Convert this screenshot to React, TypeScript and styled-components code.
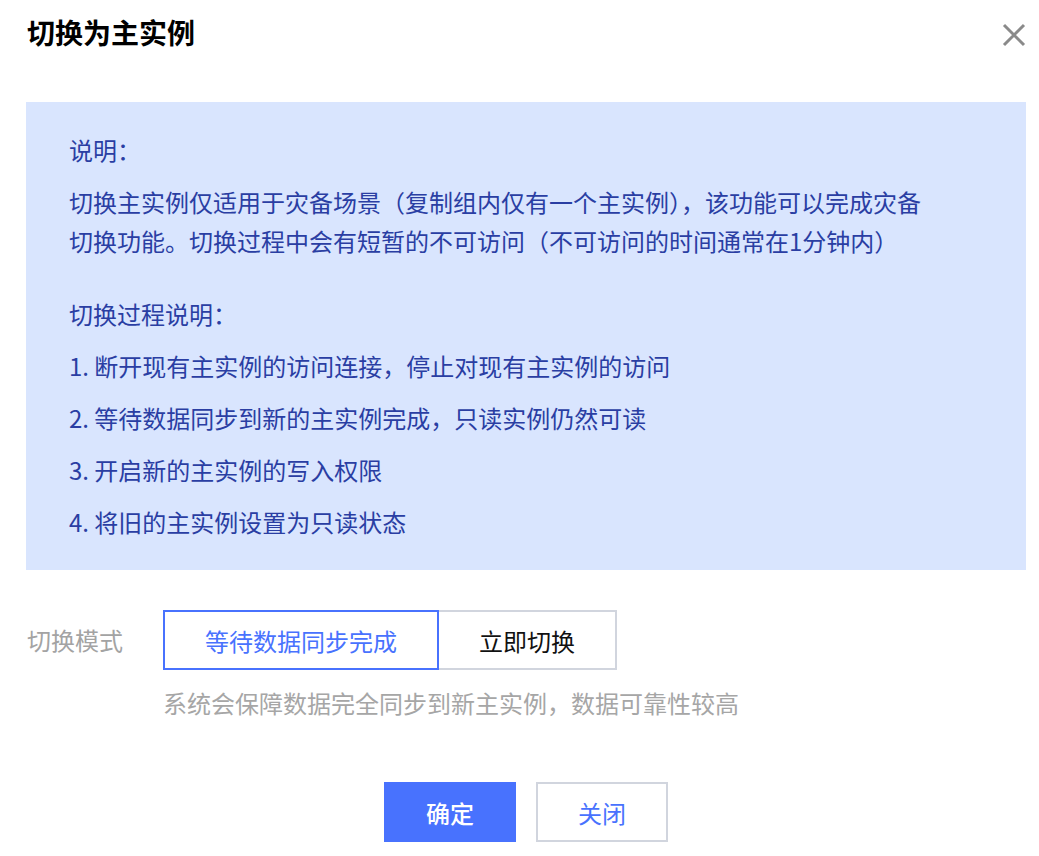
import React, { useState } from "react";
import styled, { createGlobalStyle } from "styled-components";

const GlobalStyle = createGlobalStyle`
  html, body {
    margin: 0;
    padding: 0;
    background: #ffffff;
  }
  body {
    font-family: "Noto Sans CJK SC", "Noto Sans", sans-serif;
  }
`;

const DialogWrapper = styled.div`
  width: 1039px;
  height: 856px;
  box-sizing: border-box;
  padding: 13px 13px 0 26px;
  background: #fff;
  display: flex;
  flex-direction: column;
`;

const DialogHeader = styled.div`
  display: flex;
  align-items: center;
  justify-content: space-between;
  height: 38px;
  margin-bottom: 51px;
`;

const DialogTitle = styled.h2`
  margin: 0 0 0 1px;
  font-size: 28px;
  font-weight: 700;
  line-height: 38px;
  color: #000;
`;

const CloseButton = styled.button`
  width: 28px;
  height: 28px;
  padding: 0;
  margin: 6px -2px 0 0;
  border: none;
  background: none;
  display: flex;
  align-items: center;
  justify-content: center;
  cursor: pointer;
`;

const InfoBox = styled.div`
  background: #d9e5fe;
  color: #2a3ea3;
  padding: 28px 43px 29px;
  font-size: 24px;
  line-height: 39px;
`;

const InfoLine = styled.p<{ $gapTop?: boolean }>`
  margin: ${({ $gapTop }) => ($gapTop ? "34px" : "0")} 0 13px;
  &:last-child {
    margin-bottom: 0;
  }
`;

const FormRow = styled.div`
  display: flex;
  align-items: flex-start;
  margin-top: 40px;
`;

const FormLabel = styled.div`
  width: 136px;
  font-size: 24px;
  line-height: 60px;
  color: #a3a3a3;
  padding-left: 1px;
`;

const FormControls = styled.div`
  display: flex;
  flex-direction: column;
`;

const SegmentGroup = styled.div`
  display: flex;
`;

const SegmentButton = styled.button<{ $active?: boolean }>`
  position: relative;
  height: 60px;
  padding: 0 40px;
  margin-left: -2px;
  font-family: inherit;
  font-size: 24px;
  background: #fff;
  border: 2px solid ${({ $active }) => ($active ? "#4872fe" : "#d1d5de")};
  color: ${({ $active }) => ($active ? "#4872fe" : "#111")};
  z-index: ${({ $active }) => ($active ? 1 : 0)};
  cursor: pointer;
  &:first-child {
    margin-left: 0;
  }
`;

const Hint = styled.div`
  font-size: 24px;
  line-height: 36px;
  color: #a6a6a6;
  margin-top: 15px;
`;

const Footer = styled.div`
  display: flex;
  justify-content: center;
  gap: 20px;
  margin-top: 61px;
`;

const FooterButton = styled.button<{ $primary?: boolean }>`
  width: 132px;
  height: 60px;
  font-family: inherit;
  font-size: 24px;
  cursor: pointer;
  border: 2px solid ${({ $primary }) => ($primary ? "#4872fe" : "#d1d5de")};
  background: ${({ $primary }) => ($primary ? "#4872fe" : "#fff")};
  color: ${({ $primary }) => ($primary ? "#fff" : "#4872fe")};
  font-weight: ${({ $primary }) => ($primary ? 500 : 400)};
`;

const modes = [
  { key: "wait", label: "等待数据同步完成", hint: "系统会保障数据完全同步到新主实例，数据可靠性较高" },
  { key: "now", label: "立即切换", hint: "立即切换到新主实例，可能存在少量数据未同步" },
];

const steps = [
  "1. 断开现有主实例的访问连接，停止对现有主实例的访问",
  "2. 等待数据同步到新的主实例完成，只读实例仍然可读",
  "3. 开启新的主实例的写入权限",
  "4. 将旧的主实例设置为只读状态",
];

export default function App() {
  const [mode, setMode] = useState("wait");
  const current = modes.find((m) => m.key === mode);

  return (
    <>
      <GlobalStyle />
      <DialogWrapper>
        <DialogHeader>
          <DialogTitle>切换为主实例</DialogTitle>
          <CloseButton aria-label="close">
            <svg width="24" height="24" viewBox="0 0 24 24">
              <path
                d="M2 2 L22 22 M22 2 L2 22"
                stroke="#8a8a8a"
                strokeWidth="3"
                fill="none"
              />
            </svg>
          </CloseButton>
        </DialogHeader>

        <InfoBox>
          <InfoLine>说明：</InfoLine>
          <InfoLine>
            切换主实例仅适用于灾备场景（复制组内仅有一个主实例），该功能可以完成灾备
            <br />
            切换功能。切换过程中会有短暂的不可访问（不可访问的时间通常在1分钟内）
          </InfoLine>
          <InfoLine $gapTop>切换过程说明：</InfoLine>
          {steps.map((s) => (
            <InfoLine key={s}>{s}</InfoLine>
          ))}
        </InfoBox>

        <FormRow>
          <FormLabel>切换模式</FormLabel>
          <FormControls>
            <SegmentGroup>
              {modes.map((m) => (
                <SegmentButton
                  key={m.key}
                  $active={m.key === mode}
                  onClick={() => setMode(m.key)}
                >
                  {m.label}
                </SegmentButton>
              ))}
            </SegmentGroup>
            <Hint>{current?.hint}</Hint>
          </FormControls>
        </FormRow>

        <Footer>
          <FooterButton $primary>确定</FooterButton>
          <FooterButton>关闭</FooterButton>
        </Footer>
      </DialogWrapper>
    </>
  );
}
